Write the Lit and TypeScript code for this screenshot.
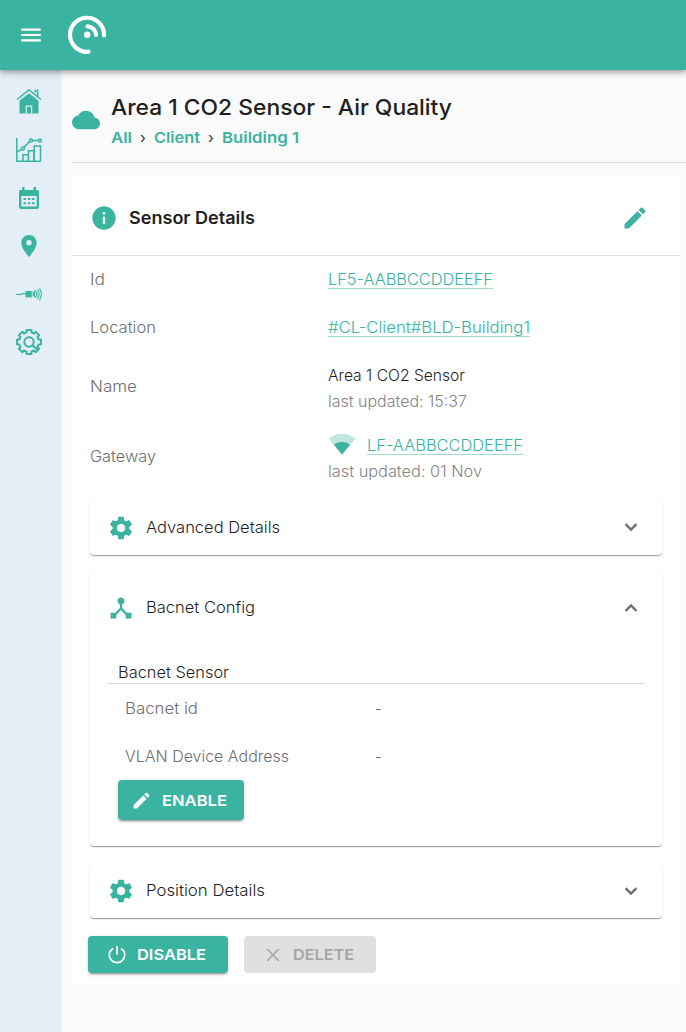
import { LitElement, html, css, svg } from "lit";
import { customElement, property } from "lit/decorators.js";

/** A run of text stretched so that it takes up a given width. */
@customElement("fit-text")
class FitText extends LitElement {
  @property({ type: Number }) width = 0;
  static styles = css`
    :host { display: inline-block; white-space: pre; }
    span { display: inline-block; transform-origin: 0 50%; }
  `;
  render() {
    return html`<span><slot></slot></span>`;
  }
  updated() {
    this.stretch();
    document.fonts.ready.then(() => this.stretch());
  }
  stretch() {
    const el = this.renderRoot.querySelector("span") as HTMLElement;
    if (!this.width || !el.offsetWidth) return;
    el.style.transform = "none";
    const w = el.getBoundingClientRect().width;
    this.style.width = `${this.width}px`;
    el.style.transform = `scaleX(${this.width / w})`;
  }
}

const PATHS: Record<string, string> = {
  menu: "M3 18h18v-2H3v2zm0-5h18v-2H3v2zm0-7v2h18V6H3z",
  cloud: "M19.35 10.04C18.67 6.59 15.64 4 12 4 9.11 4 6.6 5.64 5.35 8.04 2.34 8.36 0 10.91 0 14c0 3.31 2.69 6 6 6h13c2.76 0 5-2.24 5-5 0-2.64-2.05-4.78-4.65-4.96z",
  info: "M12 2C6.48 2 2 6.48 2 12s4.48 10 10 10 10-4.48 10-10S17.52 2 12 2zm1 15h-2v-6h2v6zm0-8h-2V7h2v2z",
  edit: "M3 17.25V21h3.75L17.81 9.94l-3.75-3.75L3 17.25zM20.71 7.04c.39-.39.39-1.02 0-1.41l-2.34-2.34a.9959.9959 0 0 0-1.41 0l-1.83 1.83 3.75 3.75 1.83-1.83z",
  pin: "M12 2C8.13 2 5 5.13 5 9c0 5.25 7 13 7 13s7-7.75 7-13c0-3.87-3.13-7-7-7zm0 9.5a2.5 2.5 0 0 1 0-5 2.5 2.5 0 0 1 0 5z",
  gear: "M19.14 12.94c.04-.3.06-.61.06-.94 0-.32-.02-.64-.07-.94l2.03-1.58c.18-.14.23-.41.12-.61l-1.92-3.32c-.12-.22-.37-.29-.59-.22l-2.39.96c-.5-.38-1.03-.7-1.62-.94l-.36-2.54c-.04-.24-.24-.41-.48-.41h-3.84c-.24 0-.43.17-.47.41l-.36 2.54c-.59.24-1.13.57-1.62.94l-2.39-.96c-.22-.08-.47 0-.59.22L2.74 8.87c-.12.21-.08.47.12.61l2.03 1.58c-.05.3-.09.63-.09.94s.02.64.07.94l-2.03 1.58c-.18.14-.23.41-.12.61l1.92 3.32c.12.22.37.29.59.22l2.39-.96c.5.38 1.03.7 1.62.94l.36 2.54c.05.24.24.41.48.41h3.84c.24 0 .44-.17.47-.41l.36-2.54c.59-.24 1.13-.56 1.62-.94l2.39.96c.22.08.47 0 .59-.22l1.92-3.32c.12-.22.07-.47-.12-.61l-2.01-1.58zM12 15.6c-1.98 0-3.6-1.62-3.6-3.6s1.62-3.6 3.6-3.6 3.6 1.62 3.6 3.6-1.62 3.6-3.6 3.6z",
  hub: "M17 16l-4-4V8.82C14.16 8.4 15 7.3 15 6c0-1.66-1.34-3-3-3S9 4.34 9 6c0 1.3.84 2.4 2 2.82V12l-4 4H3v5h5v-3.05l4-4.2 4 4.2V21h5v-5h-4z",
  down: "M7.41 8.59 12 13.17l4.59-4.58L18 10l-6 6-6-6z",
  up: "M7.41 15.41 12 10.83l4.59 4.58L18 14l-6-6-6 6z",
};

const icon = (name: string, size: number, cls = "") =>
  html`<svg class="ic ${cls}" width=${size} height=${size} viewBox="0 0 24 24"><path d=${PATHS[name]}></path></svg>`;

/* outlined cog with eight square teeth */
const cogOutline = (() => {
  const pts: string[] = [];
  for (let i = 0; i < 8; i++) {
    const a = (i * Math.PI) / 4 - Math.PI / 2;
    for (const [r, d] of [[9.9, -0.25], [12.2, -0.21], [12.2, 0.21], [9.9, 0.25]]) {
      pts.push(`${(14 + r * Math.cos(a + d)).toFixed(2)},${(14 + r * Math.sin(a + d)).toFixed(2)}`);
    }
  }
  return pts.join(" ");
})();

const NAV = [
  svg`<path class="f" d="M4.500 12.800 14 5.200l9.500 7.600V25.500h-19z"/><path class="s" d="M2 11.500 14 2l12 9.500M20.300 4.500V2.500H22.700V8"/><path class="d" d="M11.300 25.500v-7.300h5.400v7.300"/>`,
  svg`<path class="s" d="M1.800 2V25.200H26M8 25.200V18.800h5.300v6.400M13.500 25.200V14.800h5.300v10.400M19.200 25.200V10h6.300v15.200M2.500 15.800 8 12.300 15.500 4.500H24"/><circle class="b" cx="8" cy="12.500" r="1.500"/><circle class="b" cx="16" cy="4.500" r="1.500"/><circle class="b" cx="25" cy="4.500" r="1.500"/>`,
  svg`<path class="f" fill-rule="evenodd" d="M7 3h2.500v3h9V3H21v3h1.500A1.500 1.500 0 0 1 24 7.500V23a2 2 0 0 1-2 2H6a2 2 0 0 1-2-2V7.500A1.500 1.500 0 0 1 5.500 6H7zM6.300 12v10.500h15.400V12z"/><path class="f" d="M8.500 14h2.500v2H8.500zM12.800 14h2.500v2h-2.500zM17.100 14h2.500v2h-2.500zM8.500 18.200h2.500v2H8.500zM12.800 18.200h2.500v2h-2.500zM17.100 18.200h2.500v2h-2.500z"/>`,
  svg`<path class="f" transform="translate(.800 .800) scale(1.100)" d=${PATHS.pin}/>`,
  svg`<path class="t" d="M1 14.800C3 13 4 15.500 6 14.300S8.500 13.500 11 14"/><path class="f" d="M10.500 11h6.200v6.400h-6.200z"/><path class="t" d="M18.200 11.500v5M20.300 10.200c-1.300 2.500-1.300 5 0 7.500M20.800 11c1.500 2 1.500 4 0 6.200M22.500 9.200c2 3.200 2 6.500 0 9.700M24.500 8.200c2.500 4 2.500 8 0 12"/>`,
  svg`<polygon class="c" points=${cogOutline}/><circle class="c" cx="14" cy="14" r="4.700"/><path class="c" d="M17.400 17.400 22.500 21.500"/>`,
];

@customElement("app-root")
class AppRoot extends LitElement {
  static styles = css`
    :host {
      display: block; width: 100%; height: 1032px; overflow: hidden; background: #fafafa;
      font: 350 15.4px/26px Inter, "Liberation Sans", sans-serif; color: #1f1f1f;
    }
    * { box-sizing: border-box; }
    svg { display: block; flex: none; }
    .ic { fill: #3ab3a0; }
    .white { fill: #fff; }
    .grey { fill: #6e6e6e; stroke: #6e6e6e; stroke-width: .5; margin-top: -1px; }
    .bar {
      position: relative; z-index: 1; height: 70px; background: #3ab3a0; display: flex; align-items: center;
      padding-left: 18px; gap: 24px;
      box-shadow: 0 2px 4px -1px rgba(0,0,0,.2), 0 4px 5px rgba(0,0,0,.14), 0 1px 10px rgba(0,0,0,.12);
    }
    .body { display: flex; height: 962px; }
    nav { width: 61px; background: #e4eef6; padding: 18px 0 0 15px; display: flex; flex-direction: column; gap: 20px; flex: none; }
    .f { fill: #3ab3a0; }
    .s { fill: none; stroke: #3ab3a0; stroke-width: 1.5; }
    .t { fill: none; stroke: #3ab3a0; stroke-width: 1.1; }
    .c { fill: none; stroke: #3ab3a0; stroke-width: 2; stroke-linejoin: round; }
    .d { fill: none; stroke: #e4eef6; stroke-width: 1.2; }
    .b { fill: #e4eef6; stroke: #3ab3a0; stroke-width: 1.4; }
    main { flex: 1; padding-left: 11px; min-width: 0; }
    .head { height: 93px; border-bottom: 1px solid #dcdcdc; display: flex; align-items: center; gap: 11px; padding-top: 8px; }
    .head > div { padding-top: 3px; }
    h1 { margin: 0; font-size: 21.600px; line-height: 31px; font-weight: 500; }
    .crumbs { display: flex; line-height: 29px; font-weight: 600; font-size: 15px; color: #3ab3a0; }
    .crumbs i { font-style: normal; font-weight: 400; color: #333; width: 22px; text-align: center; }
    .card { width: 608px; height: 809px; margin-top: 12px; background: #fff; border-radius: 4px; }
    .card-head { height: 81px; border-bottom: 1px solid #dcdcdc; display: flex; align-items: center; padding: 5px 31px 0 18px; }
    h2 { flex: 1; margin: 0 0 0 11px; font-size: 17px; font-weight: 600; }
    .row { display: grid; grid-template-columns: 238px 1fr; height: 48px; align-items: center; padding-left: 18px; color: #6f6f6f; }
    .tall { height: 70px; }
    .tall .val { padding-top: 4px; }
    .row .val > div { display: flex; align-items: center; height: 26px; }
    .row .val > .dark { color: #1f1f1f; }
    .row .val > .muted { color: #858585; }
    a { color: #3ab3a0; border-bottom: 1px solid #a5dad1; line-height: 16px; display: inline-block; }
    .wifi { margin: -4px 11px 0 0; }
    .panel {
      width: 572px; margin: 0 0 17px 18px; border-radius: 4px; background: #fff;
      box-shadow: 0 2px 1px -1px rgba(0,0,0,.2), 0 1px 1px rgba(0,0,0,.14), 0 1px 3px rgba(0,0,0,.12);
    }
    .sum { height: 55px; display: flex; align-items: center; padding: 0 19px 0 17px; }
    .sum fit-text { margin: 0 auto 0 11px; }
    .first { margin-top: 8px; }
    .open { height: 274px; margin-bottom: 18px; }
    .open .sum { height: 72px; }
    .last .sum { height: 54px; }
    .sub { margin: 15px 17px 0; padding-left: 11px; height: 25px; border-bottom: 1px solid #dcdcdc; line-height: 27px; }
    .inner { grid-template-columns: 250px 1fr; padding: 2px 0 0 35px; }
    .btn {
      display: inline-flex; align-items: center; height: 37px; border-radius: 4px; background: #3ab3a0; color: #fff;
      font-weight: 600; font-size: 15px; box-shadow: 0 3px 1px -2px rgba(0,0,0,.2), 0 2px 2px rgba(0,0,0,.14), 0 1px 5px rgba(0,0,0,.12);
    }
    .enable { width: 126px; height: 40px; margin-left: 28px; padding: 1px 0 0 13px; gap: 10px; }
    .actions { display: flex; gap: 16px; padding-left: 16px; margin-top: 18px; }
    .disable { width: 140px; padding-left: 18px; gap: 9px; }
    .delete { width: 132px; padding-left: 18px; gap: 9px; background: #e0e0e0; color: #a6a6a6; box-shadow: none; }
    .line { fill: none; stroke: currentColor; stroke-width: 1.7; stroke-linecap: round; }
  `;

  render() {
    return html`
      <div class="bar">
        ${icon("menu", 26, "white")}
        <svg width="40" height="40" viewBox="0 0 40 40" fill="none" stroke="#fff" stroke-width="4.200" stroke-linecap="round">
          <path d="M20.500 36.700A17 17 0 1 1 36 20.500"></path>
          <path d="M19.500 11.300A9 9 0 0 1 28 20"></path>
          <circle cx="19.200" cy="19.800" r="3.200" fill="#fff" stroke="none"></circle>
        </svg>
      </div>
      <div class="body">
        <nav>${NAV.map((n) => html`<svg width="28" height="28" viewBox="0 0 28 28">${n}</svg>`)}</nav>
        <main>
          <div class="head">
            ${icon("cloud", 28)}
            <div>
              <h1><fit-text width="341">Area 1 CO2 Sensor - Air Quality</fit-text></h1>
              <div class="crumbs"><fit-text width="21">All</fit-text><i>›</i><fit-text width="46">Client</fit-text><i>›</i><fit-text width="77">Building 1</fit-text></div>
            </div>
          </div>
          <section class="card">
            <div class="card-head">
              ${icon("info", 28)}
              <h2><fit-text width="126">Sensor Details</fit-text></h2>
              ${icon("edit", 28)}
            </div>
            <div class="row"><fit-text width="15">Id</fit-text><div class="val"><a><fit-text width="165">LF5-AABBCCDDEEFF</fit-text></a></div></div>
            <div class="row"><fit-text width="66">Location</fit-text><div class="val"><a><fit-text width="202">#CL-Client#BLD-Building1</fit-text></a></div></div>
            <div class="row tall"><fit-text width="47">Name</fit-text>
              <div class="val">
                <div class="dark"><fit-text width="137">Area 1 CO2 Sensor</fit-text></div>
                <div class="muted"><fit-text width="139">last updated: 15:37</fit-text></div>
              </div>
            </div>
            <div class="row tall"><fit-text width="66">Gateway</fit-text>
              <div class="val">
                <div>
                  <svg class="wifi" width="28" height="22" viewBox="0 0 28 22">
                    <path d="M.5 5.500Q14-4 27.500 5.500L14 21.500z" fill="#c1e6df"></path>
                    <path d="M5.800 11.800Q14 5.500 22.200 11.800L14 21.500z" fill="#3ab3a0"></path>
                  </svg>
                  <a><fit-text width="156">LF-AABBCCDDEEFF</fit-text></a>
                </div>
                <div class="muted"><fit-text width="154">last updated: 01 Nov</fit-text></div>
              </div>
            </div>
            <div class="panel first"><div class="sum">${icon("gear", 28)}<fit-text width="134">Advanced Details</fit-text>${icon("down", 24, "grey")}</div></div>
            <div class="panel open">
              <div class="sum">${icon("hub", 28)}<fit-text width="109">Bacnet Config</fit-text>${icon("up", 24, "grey")}</div>
              <div class="sub"><fit-text width="111">Bacnet Sensor</fit-text></div>
              <div class="row inner"><fit-text width="73">Bacnet id</fit-text><span>-</span></div>
              <div class="row inner"><fit-text width="164">VLAN Device Address</fit-text><span>-</span></div>
              <div class="btn enable">${icon("edit", 21, "white")}<fit-text width="65">ENABLE</fit-text></div>
            </div>
            <div class="panel last"><div class="sum">${icon("gear", 28)}<fit-text width="119">Position Details</fit-text>${icon("down", 24, "grey")}</div></div>
            <div class="actions">
              <div class="btn disable">
                <svg class="line" width="22" height="22" viewBox="0 0 22 22"><path d="M11 2.500V10M6.500 4.700A7.700 7.700 0 1 0 15.500 4.700"></path></svg>
                <fit-text width="69">DISABLE</fit-text>
              </div>
              <div class="btn delete">
                <svg class="line" width="22" height="22" viewBox="0 0 22 22"><path d="M5.500 5.500 16.500 16.500M16.500 5.500 5.500 16.500"></path></svg>
                <fit-text width="61">DELETE</fit-text>
              </div>
            </div>
          </section>
        </main>
      </div>
    `;
  }
}
